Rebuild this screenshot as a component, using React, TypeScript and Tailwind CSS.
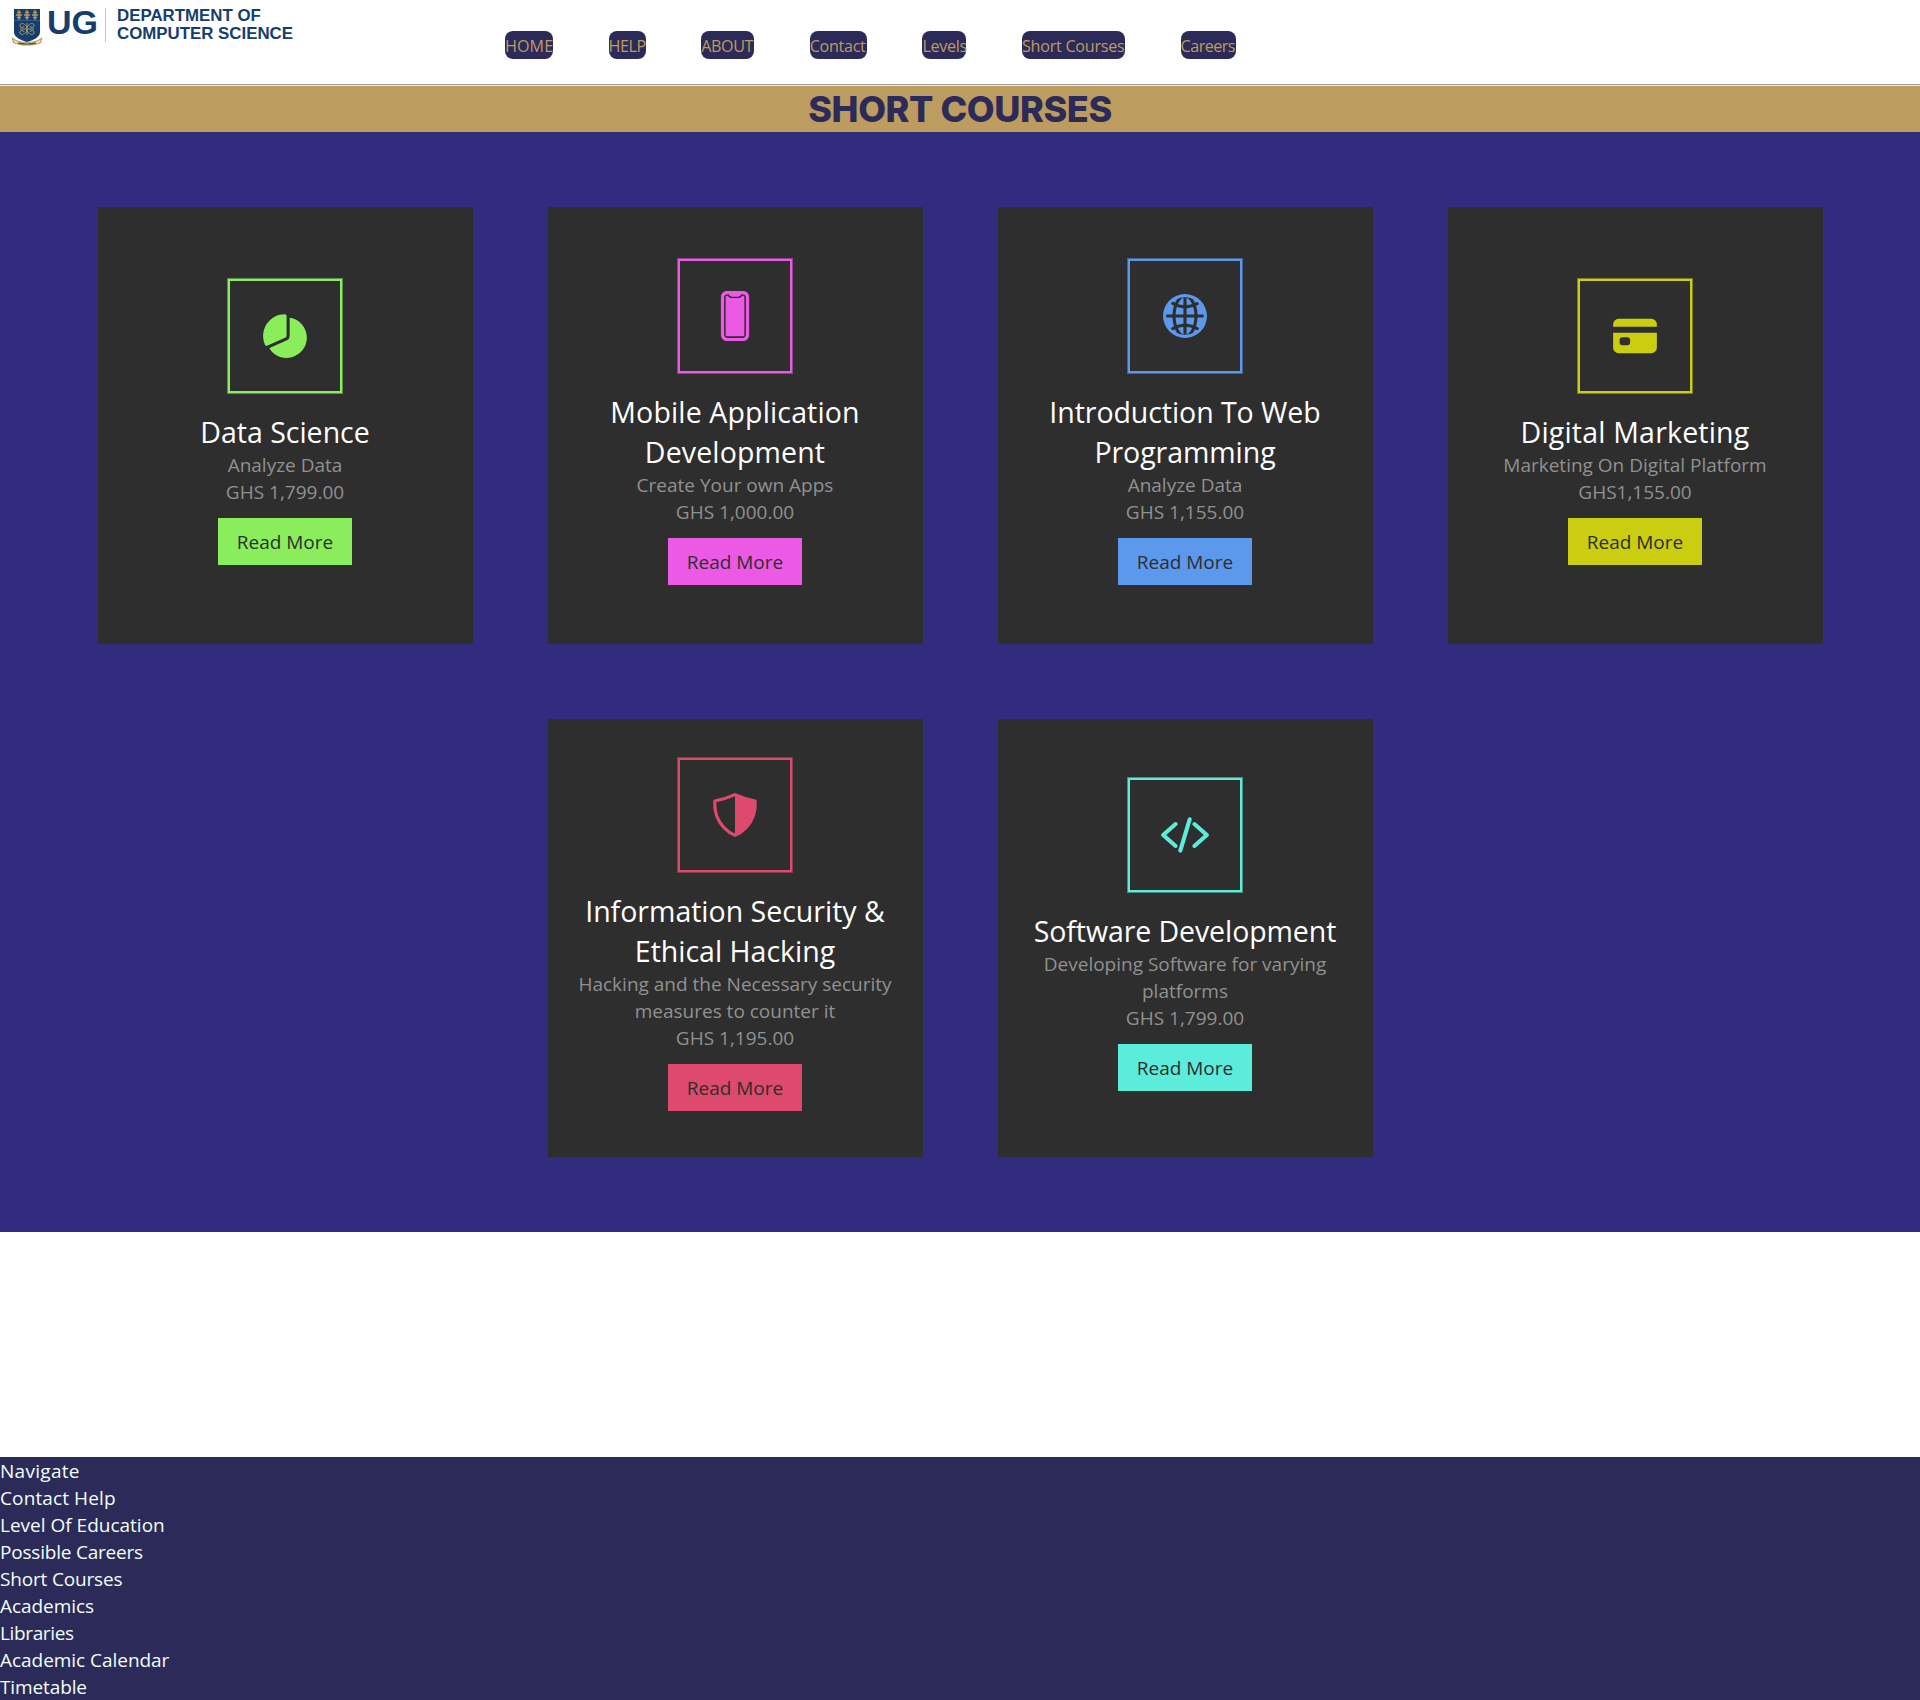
import type { ComponentType } from "react";
import { IoCard, IoCodeSlash, IoGlobe, IoPhonePortrait, IoPieChart, IoShieldHalf } from "react-icons/io5";

type Course = {
  title: string;
  text: string;
  price: string;
  Icon: ComponentType<{ className?: string }>;
  color: string;
  button: string;
  tracking?: string;
};

const topRow: Course[] = [
  { title: "Data Science", text: "Analyze Data", price: "GHS 1,799.00", Icon: IoPieChart, color: "text-[#8aee5c]", button: "bg-[#8aee5c]" },
  { title: "Mobile Application Development", text: "Create Your own Apps", price: "GHS 1,000.00", Icon: IoPhonePortrait, color: "text-[#ec5ae5]", button: "bg-[#ec5ae5]", tracking: "tracking-[0.005em]" },
  { title: "Introduction To Web Programming", text: "Analyze Data", price: "GHS 1,155.00", Icon: IoGlobe, color: "text-[#5c98ec]", button: "bg-[#5c98ec]", tracking: "tracking-[-0.002em]" },
  { title: "Digital Marketing", text: "Marketing On Digital Platform", price: "GHS1,155.00", Icon: IoCard, color: "text-[#cbcd10]", button: "bg-[#cbcd10]", tracking: "tracking-[0.007em]" },
];

const bottomRow: Course[] = [
  { title: "Information Security & Ethical Hacking", text: "Hacking and the Necessary security measures to counter it", price: "GHS 1,195.00", Icon: IoShieldHalf, color: "text-[#dd4a6d]", button: "bg-[#dd4a6d]" },
  { title: "Software Development", text: "Developing Software for varying platforms", price: "GHS 1,799.00", Icon: IoCodeSlash, color: "text-[#5cecdb]", button: "bg-[#5cecdb]", tracking: "tracking-[-0.003em]" },
];

const navItems = [
  { label: "HOME", cls: "w-12 tracking-[0.005em]" },
  { label: "HELP", cls: "w-[37px] tracking-[-0.03em]" },
  { label: "ABOUT", cls: "w-[53px] tracking-[-0.025em]" },
  { label: "Contact", cls: "w-[57px] tracking-[-0.02em]" },
  { label: "Levels", cls: "w-11 tracking-[-0.018em]" },
  { label: "Short Courses", cls: "w-[103px] tracking-[-0.016em]" },
  { label: "Careers", cls: "w-[55px] tracking-[-0.033em]" },
];

const footerItems = [
  { label: "Navigate", cls: "tracking-[0.015em]" },
  { label: "Contact Help", cls: "tracking-[0.006em]" },
  { label: "Level Of Education", cls: "tracking-normal" },
  { label: "Possible Careers", cls: "tracking-[-0.011em]" },
  { label: "Short Courses", cls: "tracking-[-0.009em]" },
  { label: "Academics", cls: "tracking-[-0.003em]" },
  { label: "Libraries", cls: "tracking-[-0.019em]" },
  { label: "Academic Calendar", cls: "tracking-[-0.002em]" },
  { label: "Timetable", cls: "tracking-[-0.006em]" },
];

function Crest() {
  return (
    <svg viewBox="0 0 32 38" className="mt-2 h-[38px] w-8 shrink-0" fill="none">
      <path d="M3 1h26v23c0 5-6 8-13 10C9 32 3 29 3 24Z" fill="#163d70" />
      <path d="M3 12.5h26" stroke="#44608a" strokeWidth=".8" />
      {[8, 16, 24].map((x) => (
        <g key={x} stroke="#b79a5d">
          <path d={`M${x} 2v10`} strokeWidth="1.3" />
          <path d={`M${x - 2} 4.5h4M${x - 3} 7h6M${x - 2} 9.5h4`} strokeWidth="1.4" />
        </g>
      ))}
      <g stroke="#a99a70" strokeWidth="1">
        <path d="M16 15v12M9 21h14" />
        <path d="M16 20c-1-4-6-6-7-3s4 3 4 1M16 20c1-4 6-6 7-3s-4 3-4 1M16 22c-1 4-6 6-7 3s4-3 4-1M16 22c1 4 6 6 7 3s-4-3-4-1" />
      </g>
      <path d="M1.500 30.500l1 4c4 2 8 2.500 13.500 2.500s9.500-.5 13.500-2.500l1-4c-4 3-9 4-14.500 4s-10.500-1-14.500-4Z" fill="#efe4c8" stroke="#bd9f60" strokeWidth="1.200" />
      <path d="M7 34.900c5 1.300 13 1.300 18 0" stroke="#544f45" strokeWidth="1.300" />
    </svg>
  );
}

function CourseCard({ title, text, price, Icon, color, button, tracking = "tracking-normal" }: Course) {
  return (
    <article className="flex w-[375px] flex-col items-center justify-center bg-[#2e2e2e] px-[30px] pb-2 text-center">
      <div className={`relative flex size-[116px] shrink-0 items-center justify-center ${color}`}>
        <span className="absolute inset-0 border border-current opacity-50" />
        <span className="absolute inset-px border-2 border-current" />
        <Icon className="size-[50px]" />
      </div>
      <h2 className={`mt-[18px] text-[28.5px] leading-10 text-white ${tracking}`}>{title}</h2>
      <p className="text-[19px] leading-[27px] text-[#919191]">{text}</p>
      <p className="text-[19px] leading-[27px] text-[#919191]">{price}</p>
      <button className={`mt-3 h-[47px] w-[134px] shrink-0 pt-0.5 text-[19px] leading-[27px] text-[#2e2e2e] ${button}`}>Read More</button>
    </article>
  );
}

export default function App() {
  return (
    <div className="h-[1700px] w-full overflow-hidden bg-white font-['Open_Sans','Noto_Sans',sans-serif]">
      <header className="flex h-21 items-start">
        <div className="flex w-[505px] items-start pl-[11px] font-['Liberation_Sans',Arial,sans-serif] font-bold text-[#163d70]">
          <Crest />
          <span className="ml-1 mt-[5px] text-[34px] leading-[35px]">UG</span>
          <span className="ml-[7px] mt-2 h-[34px] w-px bg-[#d6c7a4]" />
          <span className="ml-[11px] mt-[7px] whitespace-nowrap text-[16.85px] leading-[18px]">
            DEPARTMENT OF<br />COMPUTER SCIENCE
          </span>
        </div>
        <nav className="flex gap-[55.6px] pt-[31px]">
          {navItems.map(({ label, cls }) => (
            <a key={label} className={`h-7 whitespace-nowrap rounded-lg bg-[#2c2a59] text-[16.15px] leading-[30px] text-[#bc9c5f] ${cls}`}>{label}</a>
          ))}
        </nav>
      </header>
      <div className="h-0.5 border-b border-t border-b-[#eeeeee] border-t-[#9a9a9a]" />
      <h1 className="h-[46px] bg-[#bc9c5f] text-center font-['Inter',sans-serif] text-[36px] font-extrabold leading-[47px] tracking-[-0.4px] text-[#2c2a59]">SHORT COURSES</h1>
      <main className="flex h-[1100px] flex-col gap-[75px] bg-[#322c7f] py-[75px]">
        <div className="flex h-[437px] justify-center gap-[75px]">
          {topRow.map((c) => <CourseCard key={c.title} {...c} />)}
        </div>
        <div className="flex h-[438px] justify-center gap-[75px]">
          {bottomRow.map((c) => <CourseCard key={c.title} {...c} />)}
        </div>
      </main>
      <footer className="mt-[225px] h-[243px] bg-[#2c2a59] pt-px text-[19px] leading-[27px] text-[#f0fff8]">
        <ul>
          {footerItems.map(({ label, cls }) => <li key={label} className={cls}>{label}</li>)}
        </ul>
      </footer>
    </div>
  );
}
